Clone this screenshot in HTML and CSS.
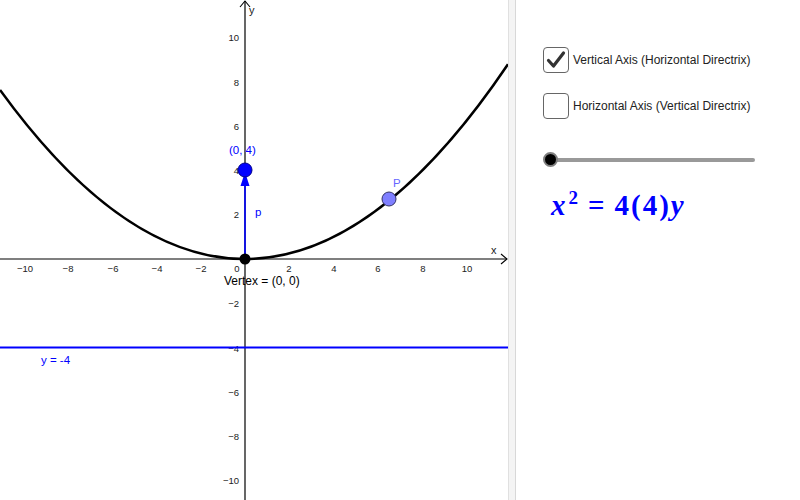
FILE: index.html
```html
<!DOCTYPE html>
<html>
<head>
<meta charset="utf-8">
<link rel="stylesheet" href="styles.css">
</head>
<body>
<div class="app">
  <div class="graphics">
    <svg class="plot" width="508" height="500" viewBox="0 0 508 500">
      <!-- axes -->
      <line x1="0" y1="259" x2="507" y2="259" class="axis"/>
      <polyline points="501,254 507,259 501,264" class="axis-arrow"/>
      <line x1="245" y1="1" x2="245" y2="500" class="axis"/>
      <polyline points="240,7 245,1 250,7" class="axis-arrow"/>
      <text x="491" y="254" class="axis-name">x</text>
      <text x="249" y="14" class="axis-name">y</text>
      <!-- x tick labels -->
      <g class="tick">
        <text x="25" y="272" text-anchor="middle">−10</text>
        <text x="68" y="272" text-anchor="middle">−8</text>
        <text x="113" y="272" text-anchor="middle">−6</text>
        <text x="157" y="272" text-anchor="middle">−4</text>
        <text x="201" y="272" text-anchor="middle">−2</text>
        <text x="237" y="272" text-anchor="middle">0</text>
        <text x="289" y="272" text-anchor="middle">2</text>
        <text x="334" y="272" text-anchor="middle">4</text>
        <text x="378" y="272" text-anchor="middle">6</text>
        <text x="423" y="272" text-anchor="middle">8</text>
        <text x="467" y="272" text-anchor="middle">10</text>
      </g>
      <!-- y tick labels -->
      <g class="tick" text-anchor="end">
        <text x="239" y="41">10</text>
        <text x="239" y="86">8</text>
        <text x="239" y="130">6</text>
        <text x="239" y="174">4</text>
        <text x="239" y="218">2</text>
        <text x="239" y="307">−2</text>
        <text x="239" y="352">−4</text>
        <text x="239" y="396">−6</text>
        <text x="239" y="440">−8</text>
        <text x="239" y="484">−10</text>
      </g>
      <!-- directrix -->
      <line x1="0" y1="347.5" x2="508" y2="347.5" class="directrix"/>
      <text x="41" y="364" class="blue-label">y = -4</text>
      <!-- parabola -->
      <path d="M0,89.9 Q254,440.5 508,64.2" class="parabola"/>
      <!-- vector p -->
      <line x1="245" y1="259" x2="245" y2="184" class="vector"/>
      <polygon points="245,172 240.5,186 249.5,186" class="vec-head"/>
      <text x="255" y="216" class="blue-label">p</text>
      <!-- focus point -->
      <circle cx="245" cy="170" r="7" class="focus"/>
      <text x="229" y="154" class="blue-label">(0, 4)</text>
      <!-- vertex -->
      <circle cx="245" cy="259" r="5.5" class="vertex"/>
      <text x="224" y="285" class="label">Vertex = (0, 0)</text>
      <!-- point P -->
      <circle cx="389" cy="199" r="7" class="pointP"/>
      <text x="393" y="187" class="p-label">P</text>
    </svg>
  </div>
  <div class="divider"></div>
  <div class="panel">
    <label class="check-row">
      <span class="box checked">
        <svg width="22" height="22" viewBox="0 0 22 22"><polyline points="3.5,11.5 8.5,17 18.5,4" class="tick-mark"/></svg>
      </span>
      <span class="check-text">Vertical Axis (Horizontal Directrix)</span>
    </label>
    <label class="check-row">
      <span class="box"></span>
      <span class="check-text">Horizontal Axis (Vertical Directrix)</span>
    </label>
    <div class="slider">
      <div class="track"></div>
      <div class="knob"></div>
    </div>
    <div class="formula"><i>x</i><sup>2</sup><span class="eq">=</span>4(4)<i>y</i></div>
  </div>
</div>
</body>
</html>
```
FILE: styles.css
```css
html, body {
  margin: 0;
  padding: 0;
  background: #ffffff;
}
.app {
  display: flex;
  width: 800px;
  height: 500px;
  overflow: hidden;
  font-family: "Liberation Sans", Arial, sans-serif;
}
.graphics {
  width: 508px;
  height: 500px;
  flex: none;
}
.plot {
  display: block;
}
.axis {
  stroke: #000;
  stroke-width: 1.2;
}
.axis-arrow {
  fill: none;
  stroke: #000;
  stroke-width: 1.1;
}
.axis-name {
  font-size: 11px;
  fill: #222;
  font-family: "Liberation Sans", Arial, sans-serif;
}
.tick text {
  font-size: 9.5px;
  fill: #222;
  font-family: "Liberation Sans", Arial, sans-serif;
}
.directrix {
  stroke: #0000ff;
  stroke-width: 2.2;
}
.parabola {
  fill: none;
  stroke: #000;
  stroke-width: 2.6;
}
.vector {
  stroke: #0000ff;
  stroke-width: 1.6;
}
.vec-head {
  fill: #0000ff;
}
.blue-label {
  fill: #0000ff;
  font-size: 11.5px;
  font-family: "Liberation Sans", Arial, sans-serif;
}
.label {
  fill: #000;
  font-size: 12px;
  font-family: "Liberation Sans", Arial, sans-serif;
}
.p-label {
  fill: #6666ff;
  font-size: 11.5px;
  font-family: "Liberation Sans", Arial, sans-serif;
}
.focus {
  fill: #0000ff;
  stroke: #00008a;
  stroke-width: 1;
}
.vertex {
  fill: #000;
}
.pointP {
  fill: #7f7fff;
  stroke: #333366;
  stroke-width: 1;
}
.divider {
  width: 6px;
  flex: none;
  background: #f4f4f4;
  border-left: 1px solid #e0e0e0;
  border-right: 1px solid #d8d8d8;
}
.panel {
  flex: 1;
  display: flex;
  flex-direction: column;
  padding: 46px 0 0 27px;
}
.check-row {
  display: flex;
  align-items: center;
  gap: 4px;
  height: 27px;
  margin-bottom: 19px;
}
.box {
  width: 24px;
  height: 24px;
  border: 1.5px solid #666;
  border-radius: 4px;
  display: flex;
  align-items: center;
  justify-content: center;
  flex: none;
}
.tick-mark {
  fill: none;
  stroke: #333;
  stroke-width: 3.2;
  stroke-linecap: round;
  stroke-linejoin: round;
}
.check-text {
  font-size: 12px;
  color: #222;
}
.slider {
  position: relative;
  width: 212px;
  height: 16px;
  margin-top: 14px;
  display: flex;
  align-items: center;
}
.track {
  width: 208px;
  height: 4px;
  margin-left: 4px;
  background: #999;
  border-radius: 2px;
}
.knob {
  position: absolute;
  left: 0;
  top: 0;
  width: 11px;
  height: 11px;
  background: #000;
  border: 2.5px solid #808080;
  border-radius: 50%;
}
.formula {
  margin-top: 19px;
  margin-left: 8px;
  font-family: "Liberation Serif", "Times New Roman", serif;
  font-weight: bold;
  font-size: 29px;
  color: #0000ff;
  line-height: 36px;
  letter-spacing: 2px;
}
.formula sup {
  font-size: 19px;
  line-height: 0;
  vertical-align: 11px;
  margin-left: 1px;
}
.eq {
  margin: 0 8px;
}
```
